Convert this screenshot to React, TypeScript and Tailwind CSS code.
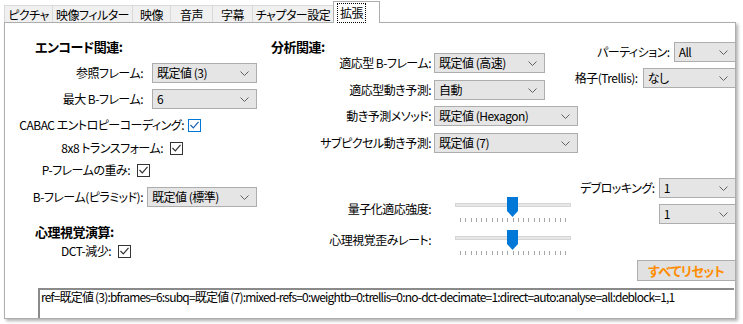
import React from 'react';

const Chevron = () => (
  <svg width="9" height="5" viewBox="0 0 9 5" className="shrink-0">
    <path d="M0.5 0.5L4.5 4.5L8.5 0.5" fill="none" stroke="#606060" strokeWidth="1" />
  </svg>
);

const Select = ({ value, className }: { value: string; className: string }) => (
  <div className={`flex h-[20px] items-center justify-between border border-[#adadad] bg-[#e5e5e5] pl-[4px] pr-[7px] ${className}`}>
    <span>{value}</span>
    <Chevron />
  </div>
);

const Check = ({ focused }: { focused?: boolean }) => (
  <div
    className={`flex h-[13px] w-[13px] shrink-0 items-center justify-center border bg-white ${
      focused ? 'border-[#0078d7]' : 'border-[#333333]'
    }`}
  >
    <svg width="9" height="8" viewBox="0 0 9 8">
      <path d="M0.5 4L3.3 6.8L8.5 0.8" fill="none" stroke={focused ? '#1862b5' : '#333333'} strokeWidth="1.2" />
    </svg>
  </div>
);

// track + pointed thumb + tick marks, 116x28
const Slider = () => {
  const ticks = Array.from({ length: 21 }, (_, i) => 5 + i * 5.25);
  return (
    <svg width="116" height="28" viewBox="0 0 116 28" className="shrink-0">
      <rect x="0.5" y="6.5" width="115" height="3" fill="#e7e7e7" stroke="#d6d6d6" />
      {ticks.map((x) => (
        <line key={x} x1={Math.round(x) + 0.5} y1="21" x2={Math.round(x) + 0.5} y2="25" stroke="#a6a6a6" />
      ))}
      <path d="M52 0H63V14L57.5 20L52 14Z" fill="#0078d7" />
    </svg>
  );
};

const tabs = [
  { label: 'ピクチャ', w: 'w-[48px]' },
  { label: '映像フィルター', w: 'w-[80px]' },
  { label: '映像', w: 'w-[38px]' },
  { label: '音声', w: 'w-[42px]' },
  { label: '字幕', w: 'w-[40px]' },
  { label: 'チャプター設定', w: 'w-[81px]' },
];

export default function App() {
  return (
    <div className="h-[324px] w-[743px] overflow-hidden whitespace-nowrap bg-white text-[12px] leading-[14px] tracking-[-0.5px] text-black font-['Noto_Sans_CJK_JP',sans-serif] [font-feature-settings:'palt']">
      {/* tab strip */}
      <div className="flex h-[22px] items-end pl-[4px]">
        {tabs.map((t) => (
          <div
            key={t.label}
            className={`flex h-[17px] items-center justify-center border-l border-t border-[#d9d9d9] bg-[#f0f0f0] pt-[1px] ${t.w}`}
          >
            {t.label}
          </div>
        ))}
        <div className="relative z-10 -mb-[1px] flex h-[22px] w-[47px] items-start border-x border-t border-[#adadad] bg-white pl-[3px] pt-[1px]">
          <span className="border border-dotted border-black px-[2px] py-[2px]">拡張</span>
        </div>
      </div>

      {/* panel */}
      <div className="ml-[4px] flex h-[297px] w-[732px] flex-col overflow-hidden border border-[#adadad] bg-white shadow-[2px_2px_3px_rgba(0,0,0,0.3)]">
        <div className="flex">
          {/* encode column */}
          <div className="flex w-[257px] shrink-0 flex-col">
            <div className="mt-[18px] h-[12px] pl-[30px] text-[13px] font-bold leading-[12px]">エンコード関連:</div>
            <div className="mt-[10px] flex h-[20px] items-center">
              <span className="w-[138px] text-right">参照フレーム:</span>
              <Select value="既定値 (3)" className="ml-[9px] w-[105px]" />
            </div>
            <div className="mt-[6px] flex h-[20px] items-center">
              <span className="w-[138px] text-right">最大 B-フレーム:</span>
              <Select value="6" className="ml-[9px] w-[105px]" />
            </div>
            <div className="mt-[9px] flex h-[14px] items-center">
              <span className="w-[179px] text-right">CABAC エントロピーコーディング:</span>
              <div className="ml-[4px]">
                <Check focused />
              </div>
            </div>
            <div className="mt-[9px] flex h-[14px] items-center">
              <span className="w-[158px] text-right">8x8 トランスフォーム:</span>
              <div className="ml-[7px]">
                <Check />
              </div>
            </div>
            <div className="mt-[8px] flex h-[14px] items-center">
              <span className="w-[125px] text-right">P-フレームの重み:</span>
              <div className="ml-[7px]">
                <Check />
              </div>
            </div>
            <div className="mt-[10px] flex h-[20px] items-center">
              <span className="w-[138px] text-right">B-フレーム(ピラミッド):</span>
              <Select value="既定値 (標準)" className="ml-[4px] w-[110px]" />
            </div>
            <div className="mt-[19px] h-[12px] pl-[30px] text-[13px] font-bold leading-[12px]">心理視覚演算:</div>
            <div className="mt-[6px] flex h-[14px] items-center">
              <span className="w-[106px] text-right">DCT-減少:</span>
              <div className="ml-[7px]">
                <Check />
              </div>
            </div>
          </div>

          {/* analysis region */}
          <div className="flex flex-1 flex-col">
            <div className="flex">
              <div className="flex w-[283px] shrink-0 flex-col">
                <div className="mt-[18px] h-[12px] pl-[9px] text-[13px] font-bold leading-[12px]">分析関連:</div>
                <div className="flex h-[20px] items-center">
                  <span className="w-[169px] text-right">適応型 B-フレーム:</span>
                  <Select value="既定値 (高速)" className="ml-[3px] w-[111px]" />
                </div>
                <div className="mt-[7px] flex h-[20px] items-center">
                  <span className="w-[169px] text-right">適応型動き予測:</span>
                  <Select value="自動" className="ml-[3px] w-[111px]" />
                </div>
              </div>
              <div className="flex flex-1 flex-col items-end pr-[4px]">
                <div className="mt-[19px] flex h-[20px] items-center">
                  <span>パーティション:</span>
                  <Select value="All" className="ml-[4px] w-[62px]" />
                </div>
                <div className="mt-[6px] flex h-[20px] items-center">
                  <span>格子(Trellis):</span>
                  <Select value="なし" className="ml-[5px] w-[93px]" />
                </div>
              </div>
            </div>
            <div className="mt-[6px] flex h-[20px] items-center">
              <span className="w-[169px] text-right">動き予測メソッド:</span>
              <Select value="既定値 (Hexagon)" className="ml-[3px] w-[144px]" />
            </div>
            <div className="mt-[7px] flex h-[20px] items-center">
              <span className="w-[169px] text-right">サブピクセル動き予測:</span>
              <Select value="既定値 (7)" className="ml-[3px] w-[144px]" />
            </div>

            <div className="flex">
              <div className="flex w-[318px] shrink-0 flex-col">
                <div className="mt-[44px] flex h-[28px] items-start">
                  <span className="mt-[5px] w-[169px] text-right">量子化適応強度:</span>
                  <div className="ml-[24px]">
                    <Slider />
                  </div>
                </div>
                <div className="mt-[5px] flex h-[28px] items-start">
                  <span className="mt-[3px] w-[169px] text-right">心理視覚歪みレート:</span>
                  <div className="ml-[24px]">
                    <Slider />
                  </div>
                </div>
              </div>
              <div className="flex flex-1 flex-col items-end pr-[4px]">
                <div className="mt-[25px] flex h-[20px] items-center">
                  <span>デブロッキング:</span>
                  <Select value="1" className="ml-[4px] w-[77px]" />
                </div>
                <Select value="1" className="mt-[6px] w-[77px]" />
                <button className="mt-[36px] flex h-[21px] w-[99px] items-center justify-center border border-[#adadad] bg-[#e1e1e1] text-[13px] font-bold text-[#ff8c00]">
                  すべてリセット
                </button>
              </div>
            </div>
          </div>
        </div>

        {/* command line */}
        <div className="ml-[33px] mt-[7px] h-[40px] w-[696px] shrink-0 border-l-2 border-t-2 border-[#8a8a8a] bg-white pl-[1px] tracking-[-0.8px]">
          ref=既定値 (3):bframes=6:subq=既定値 (7):mixed-refs=0:weightb=0:trellis=0:no-dct-decimate=1:direct=auto:analyse=all:deblock=1,1
        </div>
      </div>
    </div>
  );
}
